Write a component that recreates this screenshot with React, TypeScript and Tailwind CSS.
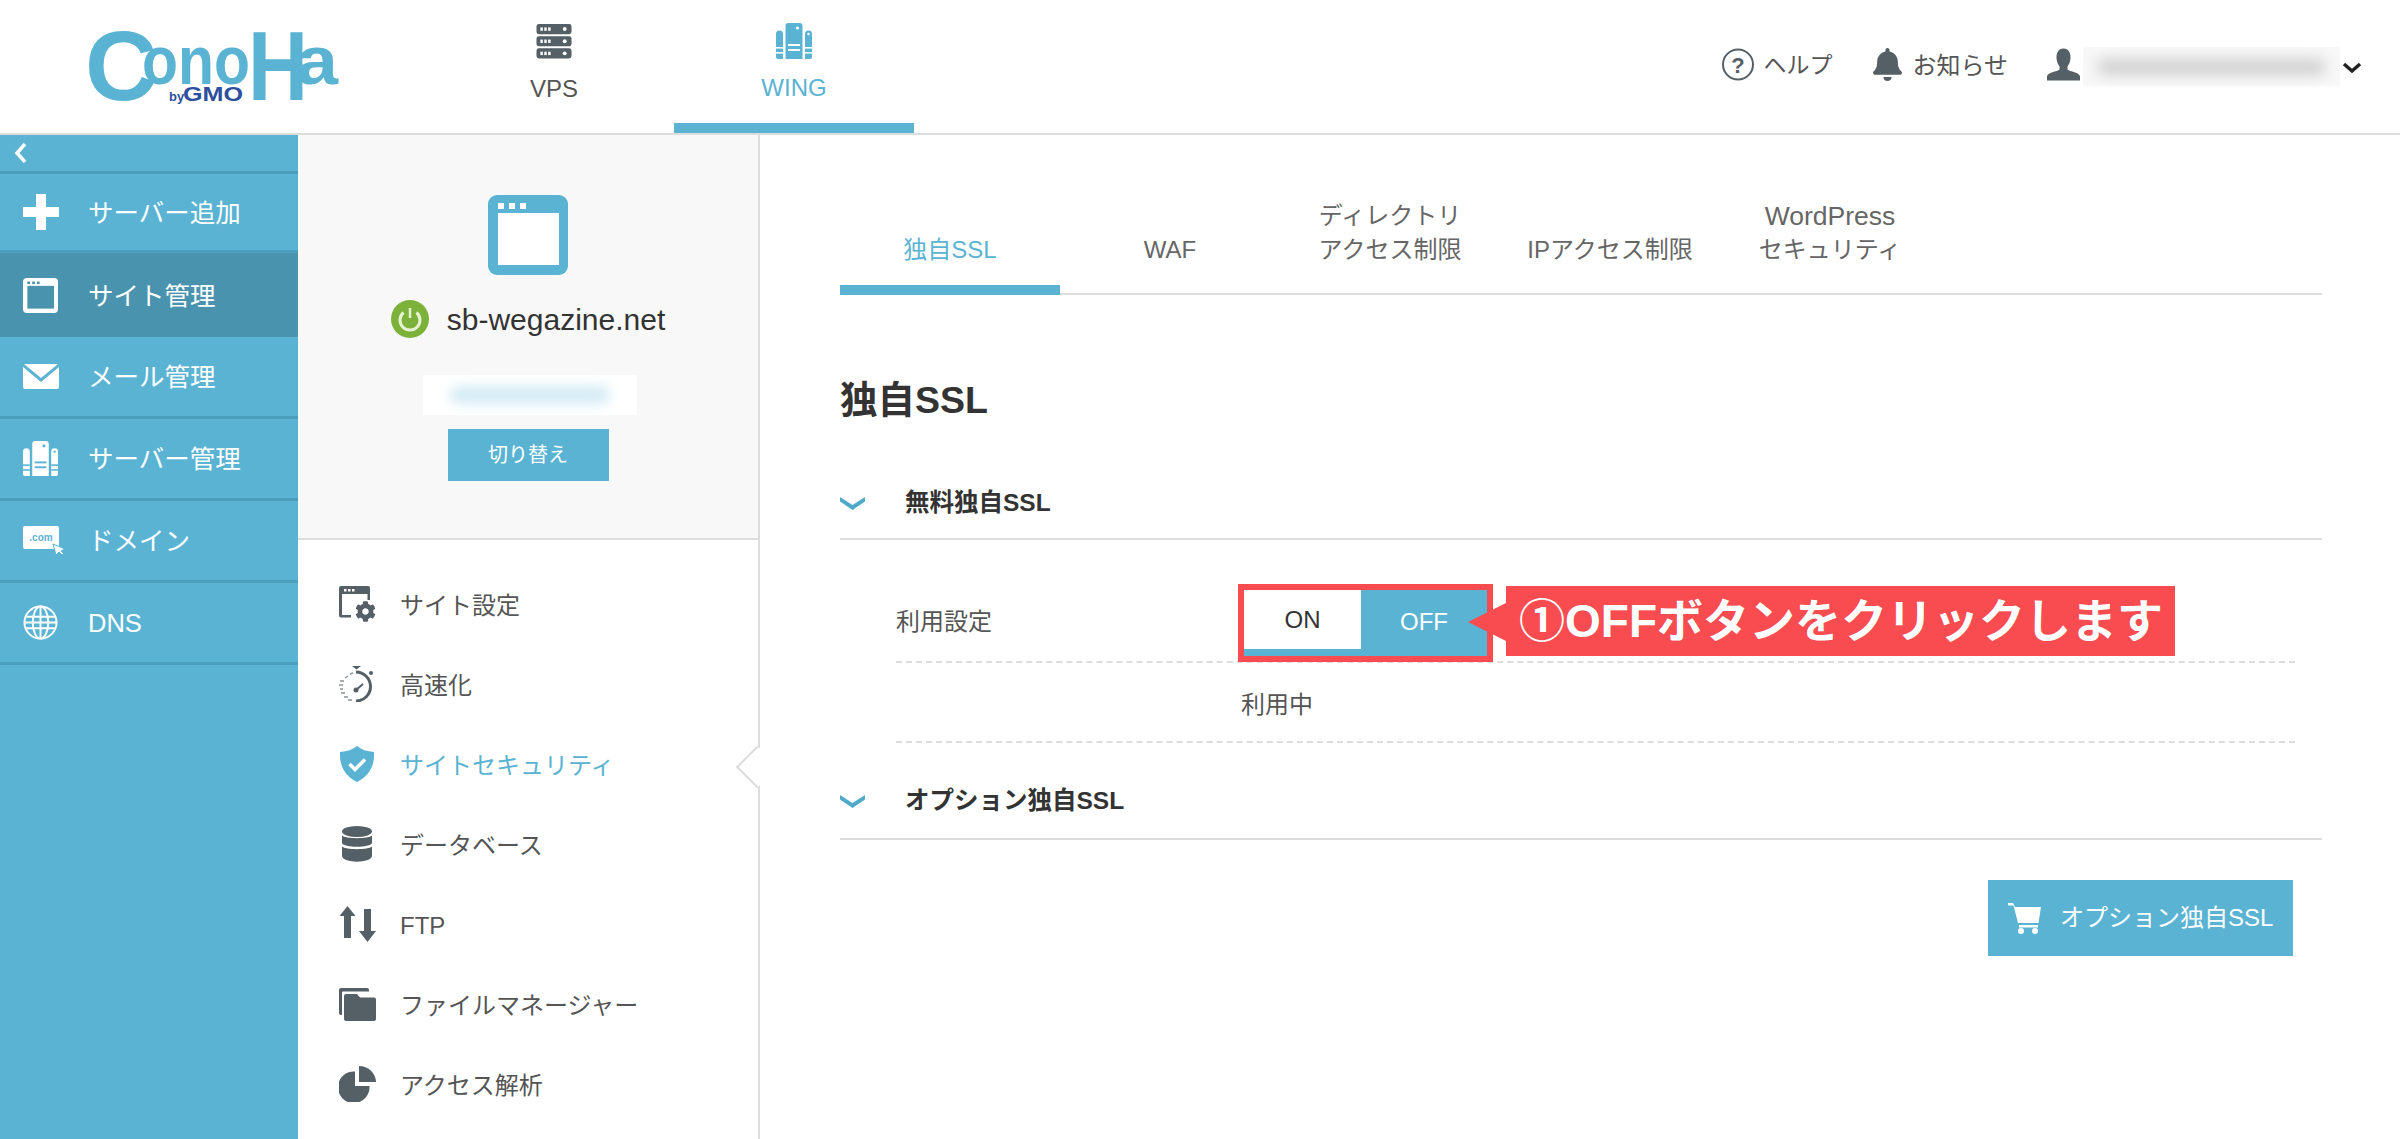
import { ReactNode } from "react";
import { FaBell, FaCog } from "react-icons/fa";

const menuItems = [
  { label: "サイト設定", icon: <SiteSettingsIcon /> },
  { label: "高速化", icon: <TimerIcon /> },
  { label: "サイトセキュリティ", icon: <ShieldIcon />, active: true },
  { label: "データベース", icon: <DatabaseIcon /> },
  { label: "FTP", icon: <ArrowsIcon /> },
  { label: "ファイルマネージャー", icon: <FoldersIcon /> },
  { label: "アクセス解析", icon: <PieIcon /> },
];

const tabs = [
  { lines: ["独自SSL"], active: true },
  { lines: ["WAF"] },
  { lines: ["ディレクトリ", "アクセス制限"] },
  { lines: ["IPアクセス制限"] },
  { lines: ["WordPress", "セキュリティ"] },
];

function WindowIcon({ outer, inner, className }: { outer: string; inner: string; className: string }) {
  return (
    <svg viewBox="0 0 80 80" className={className}>
      <rect width="80" height="80" rx="9" fill={outer} />
      <rect x="10" y="18" width="61" height="52" fill={inner} />
      <rect x="10" y="8" width="6" height="6" fill={inner} />
      <rect x="21" y="8" width="6" height="6" fill={inner} />
      <rect x="32" y="8" width="6" height="6" fill={inner} />
    </svg>
  );
}

function ServersIcon({ fill, cut, className }: { fill: string; cut: string; className: string }) {
  return (
    <svg viewBox="0 0 36 36" className={className}>
      <path d="M9.500 3a3 3 0 0 1 3-3h11a3 3 0 0 1 3 3v33h-17z" fill={fill} />
      <path d="M0 11a3.500 3.500 0 0 1 7 0v25H2a2 2 0 0 1-2-2z" fill={fill} />
      <path d="M29 11a3.500 3.500 0 0 1 7 0v23a2 2 0 0 1-2 2h-5z" fill={fill} />
      <circle cx="21.500" cy="5" r="1.600" fill={cut} />
      <circle cx="32.500" cy="11" r="1.200" fill={cut} />
      <rect x="12" y="21" width="12" height="2" fill={cut} />
      <rect x="12" y="26" width="12" height="2" fill={cut} />
      <rect x="0" y="24" width="7" height="1.600" fill={cut} />
      <rect x="0" y="29" width="7" height="1.600" fill={cut} />
      <rect x="29" y="24" width="7" height="1.600" fill={cut} />
      <rect x="29" y="29" width="7" height="1.600" fill={cut} />
    </svg>
  );
}

function VpsIcon() {
  return (
    <svg viewBox="0 0 36 36" className="h-[35px] w-[36px]">
      {[0, 12.5, 25].map((y) => (
        <g key={y}>
          <rect y={y} width="36" height="10.500" rx="2.500" fill="#545f66" />
          <rect x="4" y={y + 3.5} width="2.500" height="3.500" fill="#fff" />
          <rect x="8" y={y + 3.5} width="2.500" height="3.500" fill="#fff" />
          <rect x="12" y={y + 3.5} width="2.500" height="3.500" fill="#fff" />
          <circle cx="29" cy={y + 5.2} r="2" fill="#fff" />
        </g>
      ))}
    </svg>
  );
}

function SiteSettingsIcon() {
  return (
    <span className="relative block h-[36px] w-[37px]">
      <svg viewBox="0 0 37 36" className="h-[36px] w-[37px]">
        <path d="M2 0h27a2 2 0 0 1 2 2v12h-2.500V8H3v21h9v2.500H2a2 2 0 0 1-2-2V2a2 2 0 0 1 2-2z" fill="#545f66" />
        <rect x="5" y="3" width="2.500" height="2.500" fill="#fff" />
        <rect x="9" y="3" width="2.500" height="2.500" fill="#fff" />
        <rect x="13" y="3" width="2.500" height="2.500" fill="#fff" />
      </svg>
      <FaCog className="absolute bottom-0 right-0 h-[21px] w-[21px] text-[#545f66]" />
    </span>
  );
}

function TimerIcon() {
  return (
    <svg viewBox="0 0 36 36" className="h-[36px] w-[36px]">
      <path d="M13 0h9l-4.500 3.500z" fill="#545f66" />
      <circle cx="32" cy="7" r="2" fill="#545f66" />
      <path d="M17 6a14.500 14.500 0 1 1 0 29" fill="none" stroke="#545f66" strokeWidth="3" />
      <path d="M17 24l7-6" stroke="#545f66" strokeWidth="2" />
      <circle cx="17" cy="24" r="2.500" fill="#545f66" />
      <path d="M14 7l-3 1M9 10l-3 2M5 15H1M4 19H0M4 23H1M6 27H2M9 31H5M13 34H9" stroke="#8a9298" strokeWidth="1.500" />
    </svg>
  );
}

function ShieldIcon() {
  return (
    <svg viewBox="0 0 36 36" className="h-[36px] w-[36px]">
      <path d="M18 0c4 3.500 10 5.500 17 6 .8 14-5 24-17 30C6 30 .2 20 1 6c7-.5 13-2.500 17-6z" fill="#5ab3d3" />
      <path d="M10.500 18l5.500 5.500 10-10" fill="none" stroke="#fff" strokeWidth="3.500" />
    </svg>
  );
}

function DatabaseIcon() {
  return (
    <svg viewBox="0 0 36 36" className="h-[36px] w-[36px]">
      <ellipse cx="18" cy="5.500" rx="15" ry="5.500" fill="#545f66" />
      <path d="M3 9.500c3 3.500 27 3.500 30 0V17c-2 5-28 5-30 0z" fill="#545f66" />
      <path d="M3 20.500c3 3.500 27 3.500 30 0V30c-1 7.500-29 7.500-30 0z" fill="#545f66" />
    </svg>
  );
}

function ArrowsIcon() {
  return (
    <svg viewBox="0 0 37 36" className="h-[36px] w-[37px]">
      <path d="M8.500 0L16.500 10H12V32H5V10H.5z" fill="#545f66" />
      <path d="M25 3h7v22h5L28.500 36 20 25h5z" fill="#545f66" />
    </svg>
  );
}

function FoldersIcon() {
  return (
    <svg viewBox="0 0 37 33" className="h-[33px] w-[37px]">
      <path d="M2 0h26a2 2 0 0 1 2 2v1.500H4a1 1 0 0 0-1 1V27H2a2 2 0 0 1-2-2V2a2 2 0 0 1 2-2z" fill="#545f66" />
      <path d="M7 6h11l3 3.500h14a2 2 0 0 1 2 2V31a2 2 0 0 1-2 2H7a2 2 0 0 1-2-2V8a2 2 0 0 1 2-2z" fill="#545f66" />
    </svg>
  );
}

function PieIcon() {
  return (
    <svg viewBox="0 0 37 36" className="h-[36px] w-[37px]">
      <path d="M16 5.500V20h14.500A15.800 15.800 0 1 1 16 5.500z" fill="#545f66" />
      <path d="M20 0a17 17 0 0 1 17 16H20z" fill="#545f66" />
    </svg>
  );
}

function Chevron({ className }: { className: string }) {
  return (
    <svg viewBox="0 0 25 13" className={className}>
      <path d="M0 0l12.500 8L25 0v4.500L12.500 13 0 4.500z" fill="#4fa9c9" />
    </svg>
  );
}

function Logo() {
  return (
    <svg viewBox="0 0 250 74" className="h-[74px] w-[250px] overflow-visible font-['Liberation_Sans',sans-serif] font-bold">
      <g fill="#5ab3d3">
        <text x="-3" y="71" fontSize="98" textLength="72" lengthAdjust="spacingAndGlyphs">C</text>
        <text x="54" y="55" fontSize="68" textLength="108" lengthAdjust="spacingAndGlyphs">ono</text>
        <text x="160" y="71" fontSize="98" textLength="60" lengthAdjust="spacingAndGlyphs">H</text>
        <text x="208" y="55" fontSize="68" textLength="42" lengthAdjust="spacingAndGlyphs">a</text>
      </g>
      <text x="81" y="72" fontSize="13" fill="#2d4f9e">by</text>
      <text x="95" y="72" fontSize="20" fill="#2d4f9e" textLength="60" lengthAdjust="spacingAndGlyphs">GMO</text>
    </svg>
  );
}

function SideRow({ icon, label, className, active }: { icon: ReactNode; label: string; className: string; active?: boolean }) {
  return (
    <div className={`flex items-center pl-[23px] ${className} ${active ? "bg-[#4a93af]" : "border-b-[3px] border-[#4c9fbc]"}`}>
      <span className="flex w-[65px] shrink-0">{icon}</span>
      <span className="pt-[2px] text-[25.500px] text-white">{label}</span>
    </div>
  );
}

export default function App() {
  return (
    <div className="flex h-[1139px] w-[2400px] flex-col overflow-hidden bg-white font-['Liberation_Sans','Noto_Sans_CJK_JP',sans-serif] text-[24px] text-[#555]">
      <header className="flex h-[135px] shrink-0 border-b-2 border-[#ddd]">
        <div className="w-[434px] pl-[88px] pt-[29px]">
          <Logo />
        </div>
        <div className="flex w-[240px] flex-col items-center pt-[24px]">
          <VpsIcon />
          <span className="mt-[12px] text-[24px] text-[#555]">VPS</span>
        </div>
        <div className="flex w-[240px] flex-col items-center border-b-[10px] border-[#5ab3d3] pt-[23px]">
          <ServersIcon fill="#5ab3d3" cut="#fff" className="h-[36px] w-[36px]" />
          <span className="mt-[11px] text-[24px] text-[#5ab3d3]">WING</span>
        </div>
        <div className="ml-auto flex items-start pr-[38px] pt-[48px]">
          <svg viewBox="0 0 32 32" className="h-[33px] w-[32px]">
            <circle cx="16" cy="16" r="15" fill="none" stroke="#545f66" strokeWidth="2" />
            <text x="16" y="24" fontSize="22" fontWeight="700" textAnchor="middle" fill="#545f66">?</text>
          </svg>
          <span className="ml-[9px] text-[23px]">ヘルプ</span>
          <FaBell className="ml-[40px] h-[33px] w-[31px] text-[#545f66]" />
          <span className="ml-[9px] text-[24px]">お知らせ</span>
          <svg viewBox="0 0 33 32" className="ml-[39px] h-[33px] w-[33px]">
            <path d="M16.500 0c5 0 7 4 7 9 0 4-1.500 7-3 9v3c2 2 12.500 3 12.500 7v4H0v-4c0-4 10.500-5 12.500-7v-3C11 16 9.500 13 9.500 9c0-5 2-9 7-9z" fill="#545f66" />
          </svg>
          <div className="ml-[3px] mt-[-1px] flex h-[39px] w-[257px] items-center bg-[#f8f8f8] px-[14px]">
            <div className="h-[16px] w-full rounded-full bg-[#d0d0d0] blur-[7px]" />
          </div>
          <svg viewBox="0 0 20 12" className="ml-[2px] mt-[14px] h-[12px] w-[20px]">
            <path d="M2 2l8 7 8-7" fill="none" stroke="#222" strokeWidth="3.500" />
          </svg>
        </div>
      </header>

      <div className="flex flex-1">
        <aside className="w-[298px] shrink-0 bg-[#5ab3d3]">
          <div className="flex h-[39px] items-center border-b-[3px] border-[#4c9fbc] pl-[14px]">
            <svg viewBox="0 0 13 20" className="h-[20px] w-[13px]">
              <path d="M11 1L3 10l8 9" fill="none" stroke="#fff" strokeWidth="3.500" />
            </svg>
          </div>
          <SideRow
            className="h-[79px]"
            label="サーバー追加"
            icon={
              <svg viewBox="0 0 36 36" className="h-[36px] w-[36px]">
                <path d="M13 0h10v13h13v10H23v13H13V23H0V13h13z" fill="#fff" />
              </svg>
            }
          />
          <SideRow active className="h-[84px]" label="サイト管理" icon={<WindowIcon outer="#fff" inner="#4a93af" className="h-[35px] w-[35px]" />} />
          <SideRow
            className="h-[82px]"
            label="メール管理"
            icon={
              <svg viewBox="0 0 36 25" className="h-[25px] w-[36px]">
                <path d="M1 0h34L18 14z" fill="#fff" />
                <path d="M0 3l18 15L36 3v20a2 2 0 0 1-2 2H2a2 2 0 0 1-2-2z" fill="#fff" />
              </svg>
            }
          />
          <SideRow className="h-[82px]" label="サーバー管理" icon={<ServersIcon fill="#fff" cut="#5ab3d3" className="h-[35px] w-[35px]" />} />
          <SideRow
            className="h-[82px]"
            label="ドメイン"
            icon={
              <svg viewBox="0 0 42 29" className="h-[29px] w-[42px]">
                <rect width="36" height="23" rx="2" fill="#fff" />
                <text x="18" y="15" fontSize="10" fontWeight="700" textAnchor="middle" fill="#5ab3d3">.com</text>
                <path d="M30 18l12 5-4 2 3 3-2 1-3-3-3 3z" fill="#fff" stroke="#5ab3d3" strokeWidth="1" />
              </svg>
            }
          />
          <SideRow
            className="h-[82px]"
            label="DNS"
            icon={
              <svg viewBox="0 0 36 36" className="h-[35px] w-[35px]" fill="none" stroke="#fff" strokeWidth="2">
                <circle cx="18" cy="18" r="16.500" />
                <ellipse cx="18" cy="18" rx="8" ry="16.500" />
                <path d="M18 1.500v33M2 12h32M2 24h32M1.500 18h33" />
              </svg>
            }
          />
        </aside>

        <div className="flex w-[462px] shrink-0 flex-col border-r-2 border-[#ddd]">
          <div className="flex h-[405px] shrink-0 flex-col items-center border-b-2 border-[#ddd] bg-[#f8f8f8] pt-[60px]">
            <WindowIcon outer="#5ab3d3" inner="#fff" className="h-[80px] w-[80px]" />
            <div className="mt-[24px] flex h-[40px] items-center">
              <svg viewBox="0 0 38 38" className="h-[38px] w-[38px]">
                <circle cx="19" cy="19" r="19" fill="#7cb13a" />
                <path d="M12.500 12.500a10 10 0 1 0 13 0" fill="none" stroke="#e6f2d2" strokeWidth="3" />
                <path d="M19 8v10" stroke="#e6f2d2" strokeWidth="2.500" />
              </svg>
              <span className="ml-[18px] text-[30px] text-[#333]">sb-wegazine.net</span>
            </div>
            <div className="ml-[4px] mt-[36px] flex h-[40px] w-[214px] items-center justify-center bg-white">
              <div className="h-[18px] w-[160px] rounded-full bg-[#d4ecf5] blur-[6px]" />
            </div>
            <button className="mt-[14px] h-[52px] w-[161px] bg-[#5ab3d3] text-[20px] text-white">切り替え</button>
          </div>
          <div className="pt-[24px]">
            {menuItems.map((item) => (
              <div key={item.label} className="flex h-[80px] items-center pl-[41px]">
                <span className="flex w-[61px] shrink-0">{item.icon}</span>
                <span className={`pt-[3px] text-[24px] ${item.active ? "text-[#5ab3d3]" : "text-[#555]"}`}>{item.label}</span>
              </div>
            ))}
          </div>
        </div>

        <main className="relative flex flex-1 flex-col pl-[80px] pr-[78px]">
          <div className="absolute left-[-18px] top-[617px] h-[30px] w-[30px] rotate-45 border-b-2 border-l-2 border-[#ddd] bg-white" />
          <nav className="flex h-[160px] shrink-0 border-b-2 border-[#ddd]">
            {tabs.map((tab) => (
              <div
                key={tab.lines[0]}
                className={`mb-[-2px] flex w-[220px] flex-col items-center justify-end border-b-[10px] pb-[18px] text-[24px] leading-[34px] ${
                  tab.active ? "border-[#5ab3d3] text-[#5ab3d3]" : "border-transparent text-[#666]"
                }`}
              >
                {tab.lines.map((line) => (
                  <span key={line} className={line === "WordPress" ? "text-[26.500px]" : ""}>
                    {line}
                  </span>
                ))}
              </div>
            ))}
          </nav>

          <h1 className="mt-[80px] text-[37.500px] font-bold leading-[50px] text-[#333]">独自SSL</h1>

          <div className="mt-[43px] flex h-[72px] items-center border-b-2 border-[#ddd]">
            <Chevron className="h-[13px] w-[25px]" />
            <span className="ml-[40px] text-[24.500px] font-bold text-[#333]">無料独自SSL</span>
          </div>

          <div className="ml-[56px] mr-[27px] flex h-[123px] border-b-2 border-dashed border-[#ddd] pt-[44px]">
            <span className="w-[342px] pt-[21px] text-[24px] leading-[34px]">利用設定</span>
            <div className="relative h-[78px] w-[255px] shrink-0 border-[6px] border-[#f94c50]">
              <div className="flex h-[66px] bg-[#5ab3d3]">
                <div className="flex h-[59px] w-[117px] items-center justify-center bg-white text-[#333]">ON</div>
                <div className="flex h-[66px] flex-1 items-center justify-center pb-[3px] text-white">OFF</div>
              </div>
              <div className="absolute left-[262px] top-[-4px] flex h-[70px] w-[669px] items-center whitespace-nowrap bg-[#f94c50] pl-[13px] text-[46px] font-bold text-white">
                <span className="absolute left-[-38px] top-[17px] h-0 w-0 border-y-[19px] border-r-[38px] border-y-transparent border-r-[#f94c50]" />
                ①OFFボタンをクリックします
              </div>
            </div>
          </div>

          <div className="ml-[56px] mr-[27px] flex h-[80px] items-center border-b-2 border-dashed border-[#ddd] pl-[345px] pt-[5px]">
            利用中
          </div>

          <div className="flex h-[97px] items-center border-b-2 border-[#ddd] pt-[22px]">
            <Chevron className="h-[13px] w-[25px]" />
            <span className="ml-[40px] text-[24.500px] font-bold text-[#333]">オプション独自SSL</span>
          </div>

          <button className="mr-[29px] mt-[40px] flex h-[76px] w-[305px] items-center self-end bg-[#5ab3d3] pl-[20px] text-[24px] text-white">
            <svg viewBox="0 0 33 31" className="h-[31px] w-[33px]">
              <path d="M0 0h5l2 4h26l-2.500 16H10L5.500 2.500H0z" fill="#fff" />
              <path d="M11 22h19v2.500H11z" fill="#fff" />
              <circle cx="13" cy="28" r="3" fill="#fff" />
              <circle cx="27" cy="28" r="3" fill="#fff" />
            </svg>
            <span className="ml-[19px]">オプション独自SSL</span>
          </button>
        </main>
      </div>
    </div>
  );
}
